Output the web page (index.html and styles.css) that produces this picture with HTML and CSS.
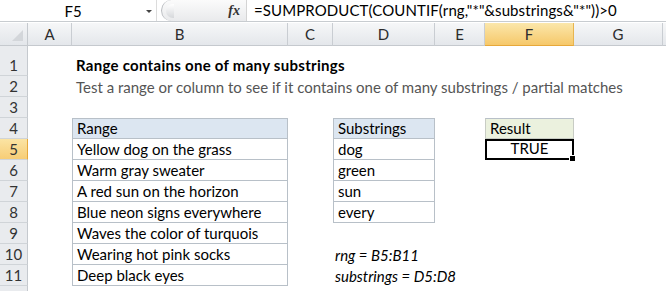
FILE: index.html
```html
<!DOCTYPE html>
<html lang="en">
<head>
    <meta charset="UTF-8">
    <title>Range contains one of many substrings</title>
    <link rel="stylesheet" href="styles.css">
</head>
<body>
    <div class="fbar">
        <div class="namebox">
            <span class="name">F5</span>
            <span class="arrow"></span>
        </div>
        <div class="fxzone">
            <span class="knob"></span>
            <span class="fx">fx</span>
        </div>
        <div class="formula">=SUMPRODUCT(COUNTIF(rng,"*"&amp;substrings&amp;"*"))&gt;0</div>
    </div>

    <div class="sheet">
        <div class="row colhead">
            <div class="corner"><span class="tri"></span></div>
            <div class="ch ca">A</div>
            <div class="ch cb">B</div>
            <div class="ch cc">C</div>
            <div class="ch cd">D</div>
            <div class="ch ce">E</div>
            <div class="ch cf active">F</div>
            <div class="ch cg">G</div>
            <div class="ch rest"></div>
        </div>

        <div class="row tall">
            <div class="rh">1</div>
            <div class="cell ca"></div>
            <div class="cell wide title">Range contains one of many substrings</div>
        </div>
        <div class="row">
            <div class="rh">2</div>
            <div class="cell ca"></div>
            <div class="cell wide subtitle">Test a range or column to see if it contains one of many substrings / partial matches</div>
        </div>
        <div class="row">
            <div class="rh">3</div>
        </div>
        <div class="row">
            <div class="rh">4</div>
            <div class="cell ca"></div>
            <div class="cell cb tbl top head">Range</div>
            <div class="cell cc"></div>
            <div class="cell cd tbl top head">Substrings</div>
            <div class="cell ce"></div>
            <div class="cell cf tbl top result">Result</div>
        </div>
        <div class="row">
            <div class="rh active">5</div>
            <div class="cell ca"></div>
            <div class="cell cb tbl">Yellow dog on the grass</div>
            <div class="cell cc"></div>
            <div class="cell cd tbl">dog</div>
            <div class="cell ce"></div>
            <div class="cell cf selected">TRUE<span class="handle"></span></div>
        </div>
        <div class="row">
            <div class="rh">6</div>
            <div class="cell ca"></div>
            <div class="cell cb tbl">Warm gray sweater</div>
            <div class="cell cc"></div>
            <div class="cell cd tbl">green</div>
        </div>
        <div class="row">
            <div class="rh">7</div>
            <div class="cell ca"></div>
            <div class="cell cb tbl">A red sun on the horizon</div>
            <div class="cell cc"></div>
            <div class="cell cd tbl">sun</div>
        </div>
        <div class="row">
            <div class="rh">8</div>
            <div class="cell ca"></div>
            <div class="cell cb tbl">Blue neon signs everywhere</div>
            <div class="cell cc"></div>
            <div class="cell cd tbl">every</div>
        </div>
        <div class="row">
            <div class="rh">9</div>
            <div class="cell ca"></div>
            <div class="cell cb tbl">Waves the color of turquois</div>
        </div>
        <div class="row">
            <div class="rh">10</div>
            <div class="cell ca"></div>
            <div class="cell cb tbl">Wearing hot pink socks</div>
            <div class="cell cc"></div>
            <div class="cell cd note">rng = B5:B11</div>
        </div>
        <div class="row">
            <div class="rh">11</div>
            <div class="cell ca"></div>
            <div class="cell cb tbl">Deep black eyes</div>
            <div class="cell cc"></div>
            <div class="cell cd note">substrings = D5:D8</div>
        </div>
        <div class="row">
            <div class="rh"></div>
        </div>
    </div>
</body>
</html>
```

FILE: styles.css
```css
body {
    margin: 0;
    font-family: Lato, "Open Sans", sans-serif;
    font-size: 15px;
    color: #000;
    background: #fff;
    overflow: hidden;
}

/* formula bar */
.fbar {
    display: flex;
    height: 21px;
    border-bottom: 1px solid #c8ccd0;
    margin-bottom: 1px;
}

.namebox {
    width: 156px;
    display: flex;
    align-items: center;
    border-right: 1px solid #dcdcdc;
}

.name {
    width: 146px;
    text-align: center;
}

.arrow {
    width: 0;
    height: 0;
    border-left: 3px solid transparent;
    border-right: 3px solid transparent;
    border-top: 3px solid #444;
    margin-top: 2px;
}

.fxzone {
    width: 84px;
    display: flex;
    align-items: center;
    justify-content: space-between;
    background: linear-gradient(#fbfbfb, #e9eaec);
    border-radius: 11px 0 0 11px;
    border-left: 1px solid #b9bcc0;
    margin-left: 4px;
}

.knob {
    width: 8px;
    height: 14px;
    margin-left: 4px;
    border-radius: 7px 0 0 7px;
    background: linear-gradient(#ffffff, #d6d8db);
}

.fx {
    font-family: "Liberation Serif", serif;
    font-style: italic;
    font-weight: bold;
    font-size: 14px;
    color: #333;
    margin-right: 6px;
}

.formula {
    flex: 1;
    padding-left: 7px;
    border-left: 1px solid #d4d4d4;
    line-height: 21px;
    white-space: nowrap;
    letter-spacing: 0.1px;
}

/* grid */
.row {
    display: flex;
    height: 21px;
}

.row.tall {
    height: 30px;
}

.colhead {
    height: 23px;
}

.corner {
    width: 28px;
    box-sizing: border-box;
    background: linear-gradient(#f3f4f6, #e3e6ea);
    border-right: 1px solid #c5c9ce;
    border-bottom: 1px solid #c5c9ce;
    position: relative;
}

.tri {
    position: absolute;
    right: 4px;
    bottom: 4px;
    width: 0;
    height: 0;
    border-left: 11px solid transparent;
    border-bottom: 11px solid #d3d6da;
}

.ch {
    box-sizing: border-box;
    background: linear-gradient(#f6f7f8, #e4e7eb);
    border-right: 1px solid #c9cdd2;
    border-bottom: 1px solid #c5c9ce;
    text-align: center;
    line-height: 22px;
    color: #2c2c2c;
}

.ch.active {
    background: linear-gradient(#fbe7ab, #f6c86a);
    border-right-color: #e7b550;
    border-bottom-color: #e7a83a;
}

.rest {
    flex: 1;
    border-right: none;
}

.rh {
    width: 28px;
    box-sizing: border-box;
    background: #e9ebee;
    border-right: 1px solid #c5c9ce;
    border-bottom: 1px solid #d0d4d8;
    color: #333;
    text-align: center;
    display: flex;
    align-items: flex-end;
    justify-content: center;
    padding-bottom: 1px;
}

.rh.active {
    background: linear-gradient(#fbe4a4, #f7cd76);
    border-right-color: #e7a83a;
}

.cell {
    box-sizing: border-box;
    display: flex;
    align-items: flex-end;
    padding: 0 4px 1px 4px;
    white-space: nowrap;
}

.ca { width: 44px; }
.cb { width: 216px; }
.cc { width: 45px; }
.cd { width: 102px; }
.ce { width: 50px; }
.cf { width: 89px; }
.cg { width: 89px; }

.wide {
    width: 560px;
    overflow: visible;
}

.title {
    font-weight: bold;
    padding-bottom: 2px;
    letter-spacing: 0.28px;
}

.subtitle {
    color: #555;
}

.tbl {
    border-left: 1px solid #b8c0c8;
    border-right: 1px solid #b8c0c8;
    border-bottom: 1px solid #b8c0c8;
}

.tbl.top {
    border-top: 1px solid #b8c0c8;
}

.head {
    background: #dce6f1;
}

.result {
    background: #ebf1de;
    border-color: #c8ccc4;
}

.selected {
    border: 2px solid #000;
    justify-content: center;
    position: relative;
}

.handle {
    position: absolute;
    right: -4px;
    bottom: -4px;
    width: 5px;
    height: 5px;
    background: #000;
    border: 1px solid #fff;
}

.note {
    font-style: italic;
    padding-left: 2px;
}
```
